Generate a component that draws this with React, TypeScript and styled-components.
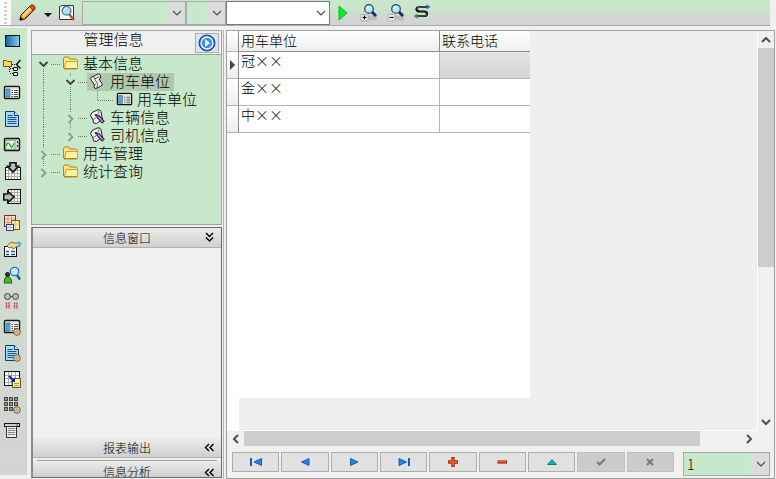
import React from "react";
import styled, { createGlobalStyle, css } from "styled-components";

const Global = createGlobalStyle`
  * { box-sizing: border-box; }
  html, body, #root { height: 100%; }
  body {
    margin: 0;
    overflow: hidden;
    background: #f0f0f0;
    color: #000;
    font-family: "Noto Sans CJK SC", "Liberation Sans", sans-serif;
    font-weight: 300;
  }
  button, select { font: inherit; color: inherit; }
  svg { display: block; flex: none; }
`;

/* ---------- layout ---------- */

const Shell = styled.div`
  display: flex;
  flex-direction: column;
  height: 100vh;
`;

const Toolbar = styled.header`
  display: flex;
  align-items: center;
  flex: none;
  height: 26px;
  margin-right: 6px;
  border-bottom: 1px solid #a9a9a9;
  background: linear-gradient(#c8e8cb 0%, #c8e8cb 25%, #d3d3d3 85%);
`;

const Grip = styled.div`
  display: flex;
  align-items: center;
  align-self: stretch;
  width: 11px;
  padding-left: 4px;
  margin-right: 6px;
  background: #fafafa;
`;

const ToolButton = styled.button<{ $w: number }>`
  display: flex;
  align-items: center;
  justify-content: center;
  flex: none;
  width: ${(p) => p.$w}px;
  height: 24px;
  padding: 0;
  border: 0;
  background: none;
`;

const Combo = styled.div<{ $w: number }>`
  display: grid;
  align-items: center;
  flex: none;
  width: ${(p) => p.$w}px;
  height: 24px;
  & > * { grid-area: 1 / 1; }
  & > svg { justify-self: end; margin-right: 4px; pointer-events: none; }
`;

const ComboSelect = styled.select<{ $tone: "green" | "white" }>`
  appearance: none;
  width: 100%;
  height: 100%;
  padding: 0 22px 0 3px;
  border: 1px solid ${(p) => (p.$tone === "white" ? "#7a7a7a" : "#a9a9a9")};
  border-radius: 0;
  outline: 0;
  font-size: 14px;
  line-height: 20px;
  background: ${(p) =>
    p.$tone === "white" ? "#fff" : "linear-gradient(to left, #dcdcdc 18px, #c8e8cb 18px)"};
`;

const ToolGroup = styled.div`
  display: flex;
  margin-left: 5px;
`;

const Body = styled.div`
  display: flex;
  flex: 1;
  min-height: 0;
  padding-top: 4px;
`;

const Strip = styled.nav`
  display: flex;
  flex-direction: column;
  flex: none;
  width: 27px;
  margin: -2px 4px 4px 0;
  background: linear-gradient(#c8e8cb 0%, #cfdfd0 45%, #d3d3d3 100%);
`;

const StripButton = styled.button`
  display: flex;
  align-items: center;
  justify-content: center;
  flex: none;
  width: 23px;
  height: 26px;
  padding: 0;
  border: 0;
  background: none;
`;

const Side = styled.aside`
  display: flex;
  flex-direction: column;
  flex: none;
  width: 191px;
`;

const TreePanel = styled.section`
  flex: none;
  height: 195px;
  border: 1px solid #a0a0a0;
  background: #c8e8cb;
`;

const PanelTitle = styled.div`
  display: flex;
  height: 24px;
  border-bottom: 1px solid #a0a0a0;
  background: #f0f0f0;
`;

const TitleText = styled.h1`
  flex: 1;
  margin: 0;
  text-align: center;
  font-size: 15px;
  line-height: 16px;
  font-weight: inherit;
`;

const GoButton = styled.button`
  display: flex;
  align-items: center;
  justify-content: center;
  width: 24px;
  height: 20px;
  margin: 2px 2px 0 0;
  padding: 0;
  border: 1px solid #b3a9ae;
  background: #dbe3ee;
`;

const TreeList = styled.ul`
  margin: 0;
  padding: 0 0 0 1px;
  list-style: none;
`;

const TreeRow = styled.li`
  display: flex;
  height: 18px;
`;

const Node = styled.button<{ $selected?: boolean }>`
  display: flex;
  align-items: center;
  height: 18px;
  padding: 0 4px 2px 2px;
  gap: 4px;
  border: 0;
  background: ${(p) => (p.$selected ? "#aec9b0" : "none")};
  font-size: 15px;
  line-height: 16px;
  white-space: nowrap;
`;

const Accordion = styled.section`
  display: flex;
  flex-direction: column;
  flex: 1;
  min-height: 0;
  margin: 2px 0 1px;
  border: 1px solid #696969;
  border-left: 2px solid #8a8a8a;
  overflow: hidden;
`;

const Fold = styled.button<{ $clipped?: boolean }>`
  display: grid;
  grid-template-columns: 1fr auto;
  align-items: ${(p) => (p.$clipped ? "start" : "center")};
  flex: none;
  height: ${(p) => (p.$clipped ? 16 : 20)}px;
  overflow: hidden;
  padding: ${(p) => (p.$clipped ? 2 : 0)}px 6px 0 17px;
  border: 0;
  border-bottom: ${(p) => (p.$clipped ? 0 : 1)}px solid #b0b0b0;
  background: linear-gradient(#ececec, #cfcfcf);
  font-size: 12px;
  line-height: 18px;
  & > svg { margin-top: ${(p) => (p.$clipped ? 4 : 0)}px; }
`;

const FoldBody = styled.div`
  flex: 1;
`;

const FoldGap = styled.div`
  flex: none;
  height: 3px;
  margin-right: 4px;
  margin-left: 4px;
  border-bottom: 1px solid #a0a0a0;
`;

const Main = styled.main`
  display: flex;
  flex-direction: column;
  flex: 1;
  min-width: 0;
  margin: 0 1px 0 2px;
  border: 1px solid #a0a0a0;
`;

const Split = styled.div`
  width: 1px;
  margin-left: 1px;
  background: #b4b4b4;
`;

const GridArea = styled.div`
  display: flex;
  flex: 1;
  min-height: 0;
`;

const Sheet = styled.div`
  display: flex;
  flex-direction: column;
  flex: 1;
  min-width: 0;
  background: linear-gradient(to right, #fff 12px, #efefef 12px);
`;

const Paper = styled.div`
  align-self: flex-start;
  flex: 1;
  margin-bottom: 32px;
  background: #fff;
`;

const Table = styled.table`
  border-collapse: separate;
  border-spacing: 0;
  table-layout: fixed;
  width: 303px;
  font-size: 14px;
`;

const cellBase = css`
  padding: 0 2px;
  text-align: left;
  vertical-align: top;
  font-weight: inherit;
  border-bottom: 1px solid #b4b4b4;
`;

const HeadCell = styled.th<{ $last?: boolean }>`
  ${cellBase}
  height: 21px;
  line-height: 19px;
  border-right: ${(p) => (p.$last ? 0 : 1)}px solid #8c8c8c;
  border-bottom-color: #8c8c8c;
  background: linear-gradient(#fff, #eee);
`;

const MarkCell = styled.th`
  ${cellBase}
  width: 12px;
  padding: 0 0 0 3px;
  vertical-align: middle;
  border-right: 1px solid #8c8c8c;
  background: linear-gradient(#fff, #eee);
`;

const Cell = styled.td<{ $active?: boolean; $last?: boolean }>`
  ${cellBase}
  height: 27px;
  line-height: 16px;
  border-right: ${(p) => (p.$last ? 0 : 1)}px solid #b4b4b4;
  background: ${(p) => (p.$active ? "linear-gradient(#e3e3e3, #d5d5d5)" : "#fff")};
`;

const VBar = styled.div`
  display: flex;
  flex-direction: column;
  align-items: center;
  flex: none;
  width: 17px;
  border-left: 1px solid #fff;
`;

const HBar = styled.div`
  display: flex;
  align-items: center;
  flex: none;
  height: 16px;
  margin-right: 17px;
  border-top: 1px solid #fff;
`;

const Arrow = styled.button`
  display: flex;
  align-items: center;
  justify-content: center;
  flex: none;
  width: 17px;
  height: 17px;
  padding: 0;
  border: 0;
  background: none;
`;

const Track = styled.div<{ $vertical?: boolean }>`
  flex: 1;
  align-self: stretch;
  display: flex;
  flex-direction: ${(p) => (p.$vertical ? "column" : "row")};
`;

const Thumb = styled.div<{ $share: number }>`
  flex: 0 0 ${(p) => p.$share}%;
  background: #cdcdcd;
`;

const Pager = styled.footer`
  display: flex;
  align-items: flex-start;
  flex: none;
  height: 32px;
  padding: 6px 4px 0 5px;
  gap: 9px;
`;

const PagerButtons = styled.div`
  display: flex;
  flex: 1;
  gap: 2px;
`;

const PagerButton = styled.button`
  display: flex;
  align-items: center;
  justify-content: center;
  flex: 1;
  height: 20px;
  padding: 0;
  border: 1px solid #adadad;
  background: #e1e1e1;
  &:disabled { border-color: #bfbfbf; background: #ccc; }
`;

/* ---------- glyphs ---------- */

type Dir = "down" | "up" | "left" | "right";
const chevrons: Record<Dir, string> = {
  down: "M1 3l4 4 4-4",
  up: "M1 7l4-4 4 4",
  left: "M7 1L3 5l4 4",
  right: "M3 1l4 4-4 4",
};

const Chevron = ({ dir, w = 1.2, color = "#505050" }: { dir: Dir; w?: number; color?: string }) => (
  <svg width="10" height="10" viewBox="0 0 10 10" fill="none" stroke={color} strokeWidth={w}>
    <path d={chevrons[dir]} />
  </svg>
);

const DoubleChevron = ({ open }: { open?: boolean }) => (
  <svg width="11" height="11" viewBox="0 0 11 11" fill="none" stroke="#000" strokeWidth="1.4">
    <path d={open ? "M2 1l3.500 3.500L9 1M2 5.500L5.500 9 9 5.500" : "M5 2L1.500 5.500 5 9M9.500 2L6 5.500 9.500 9"} />
  </svg>
);

const Icon = ({ children, size = 18 }: { children: React.ReactNode; size?: number }) => (
  <svg width={size} height={size} viewBox="0 0 18 18" fill="none" stroke="#111" strokeWidth="1">
    {children}
  </svg>
);

const Gear = () => (
  <g>
    <circle cx="14" cy="14" r="3.300" fill="#f0d7a0" stroke="#6d5532" />
    <circle cx="14" cy="14" r="1.200" fill="#fff" stroke="#8a6f3c" strokeWidth=".8" />
  </g>
);

const FormShape = () => (
  <g>
    <rect x="1.500" y="2.500" width="15" height="12" rx="1" fill="#f5f5f5" strokeWidth="1.400" />
    <path d="M2.500 4h13" stroke="#ccc" />
    <rect x="3" y="5" width="4" height="8" fill="#58a7dc" stroke="#235b8b" strokeWidth=".6" />
    <path d="M8.500 6.500h1.500M8.500 8.500h1.500M8.500 10.500h1.500M8.500 12.500h1.500M11 6.500h4M11 8.500h4M11 10.500h4M11 12.500h4" stroke="#555" />
  </g>
);

const DocShape = () => (
  <g>
    <path d="M2.500 1.500h9l4 4v11h-13z" fill="#a5dcf8" stroke="#123c64" />
    <path d="M11.500 1.500v4h4" fill="#e9f8ff" stroke="#123c64" />
    <path d="M4.500 5.500h5M4.500 7.500h9M4.500 9.500h9M4.500 11.500h9M4.500 13.500h9" stroke="#17528a" />
  </g>
);

const Lens = ({ minus }: { minus?: boolean }) => (
  <Icon>
    <path d="M7 11.500h10v5H7z" fill="#bdbdbd" stroke="none" />
    <path d="M11.500 7.500l4.500 4.500" stroke="#102c60" strokeWidth="2.800" />
    <circle cx="9" cy="4.900" r="4.300" fill="#b5ecfb" stroke="#21415f" strokeWidth="1.200" />
    <path d="M6.500 4.500q.5-1.700 2.200-2" stroke="#fff" strokeWidth="1.300" />
    <rect x="1" y="10.500" width="7" height="6.500" rx="1" fill="#eee" stroke="#999" strokeWidth=".7" />
    <path d={minus ? "M2.500 13.500h4" : "M2.500 13.500h4M4.500 11.500v4"} stroke="#000" strokeWidth="1.200" />
  </Icon>
);

const Folder = () => (
  <svg width="17" height="16" viewBox="0 0 17 16">
    <path d="M1.500 13v-9.500l1-1.500h4l1.500 2h6l1.500 1.500V13z" fill="#ffe37c" stroke="#a98624" />
    <path d="M2.500 13.500l1.500-7h11.500v7z" fill="#fff2a0" stroke="#c9a437" />
    <path d="M2 13.800h13" stroke="#b07f12" strokeWidth="1.300" />
  </svg>
);

const Scroll = () => (
  <svg width="17" height="16" viewBox="0 0 17 16">
    <path d="M1.500 5.500Q2 3.500 4 3.500L9 1q2-.5 2.500 1.500l.2 2.500-1.700 1 3 4.500q.7 2-1 2.500l-5 2.500q-2 0-2-2l.5-1.500L2.500 7.500z" fill="#eee" stroke="#222" />
    <path d="M4 4q1.500 0 1.500 1.500L8.500 11q.5 2-1 4M5.500 6l5-2.500M5 12.500l2-1" stroke="#666" fill="none" />
  </svg>
);

const ScrollPen = () => (
  <svg width="17" height="16" viewBox="0 0 17 16">
    <path d="M1.500 6.500L3 3.500 9 .700q2.500 0 3 2l.5 3.300 1 4-6 4.500-3-.5-.5-3z" fill="#f2f2f2" stroke="#222" />
    <path d="M9 1.500l1 3-4 2M4 10.500l3-1.500" stroke="#777" fill="none" />
    <path d="M8.500 7l6 6.500" stroke="#251044" strokeWidth="3.600" />
    <path d="M9 7.500l5 5.500" stroke="#b692ec" strokeWidth="1.600" />
    <path d="M5.500 5l3.500 1-2 2z" fill="#111" />
  </svg>
);

const FormIcon = () => <Icon size={17}><FormShape /></Icon>;

const stripIcons: { name: string; art: React.ReactNode }[] = [
  {
    name: "窗体",
    art: (
      <g>
        <defs>
          <linearGradient id="screen" x1="0" x2="1">
            <stop offset="0" stopColor="#0e62a8" />
            <stop offset="1" stopColor="#8ccdf2" />
          </linearGradient>
        </defs>
        <rect x="2.500" y="3.500" width="14" height="11" fill="url(#screen)" />
      </g>
    ),
  },
  {
    name: "结构",
    art: (
      <g>
        <path d="M.500 8.500v-6h3l1 1h4v5z" fill="#ffd75c" stroke="#6b5518" />
        <path d="M9 6.500h4M6.500 9v6M7 10.500h4M7 15.500h4" strokeDasharray="1 1" />
        <path d="M17.500 2l-4 4.500 4 4" strokeWidth="1.500" />
        <path d="M10.500 9.500h4v3h-4zM10.500 14.500h4v3h-4z" fill="#eee" />
      </g>
    ),
  },
  { name: "表单", art: <FormShape /> },
  { name: "文档", art: <DocShape /> },
  {
    name: "波形",
    art: (
      <g>
        <rect x="1.500" y="2.500" width="15" height="12" rx="1" fill="#d5d5d5" strokeWidth="1.400" />
        <rect x="3" y="4.500" width="9" height="8.500" fill="#e7ffe7" stroke="#777" strokeWidth=".6" />
        <path d="M3.500 10q1.500-6 3.500-1t4-2" stroke="#17a117" strokeWidth="1.200" />
        <path d="M14.500 5v2M14.500 9v2" stroke="#333" />
      </g>
    ),
  },
  {
    name: "导入",
    art: (
      <g>
        <rect x="2.500" y="5.500" width="15" height="12" fill="#fff" />
        <path d="M3 8.500h14M3 11.500h14M3 14.500h14M5.500 6v11M8.500 6v11M11.500 6v11M14.500 6v11" stroke="#aaa" />
        <path d="M7 .800h6v3.500h2.500L10 10 4.500 4.300H7z" fill="#bbb" strokeWidth="1.600" />
      </g>
    ),
  },
  {
    name: "导出",
    art: (
      <g>
        <rect x="5.500" y="1.500" width="12" height="14" fill="#fff" />
        <path d="M6 4.500h11M6 7.500h11M6 10.500h11M6 13.500h11M8.500 2v13M11.500 2v13M14.500 2v13" stroke="#aaa" />
        <path d="M.800 6h4V3.500L11 9l-6.200 5.500V12h-4z" fill="#bbb" strokeWidth="1.600" />
      </g>
    ),
  },
  {
    name: "多表",
    art: (
      <g>
        <rect x="1.500" y="1.500" width="11" height="11" fill="#ffe1d3" stroke="#7b2f20" />
        <path d="M2 5h10M2 8.500h10M5 2v10M8.500 2v10" stroke="#d99584" />
        <rect x="8.500" y="6.500" width="8" height="9" fill="#ffe99b" stroke="#776019" />
        <path d="M9 10h7M12.500 7v8" stroke="#dcc56c" />
        <rect x="3.500" y="10.500" width="7" height="6" fill="#f3f5ff" stroke="#36397e" />
        <path d="M4 13.500h6M7 11v5" stroke="#aab0e2" />
      </g>
    ),
  },
  {
    name: "属性",
    art: (
      <g>
        <rect x="1.500" y="6.500" width="12" height="10" fill="#fff" />
        <path d="M3 11.500h3M8 11.500h4M3 14.500h3M8 14.500h4" stroke="#2f42b4" strokeWidth="1.400" />
        <path d="M4 6l4-4 3 1h3l3-1v4l-4 1-3 2-1-2-3 1z" fill="#ecd889" stroke="#5d5226" strokeWidth=".8" />
        <path d="M15 2h3v4h-3z" fill="#58b8e6" stroke="none" />
      </g>
    ),
  },
  {
    name: "用户查询",
    art: (
      <g>
        <path d="M1 17l1-5 2.500-2 3 2 1.500 5z" fill="#47b82d" stroke="#22641a" />
        <circle cx="4.500" cy="8.500" r="2" fill="#333" />
        <path d="M14 9l3 4.500" stroke="#1b559a" strokeWidth="2.400" />
        <circle cx="11.500" cy="5.500" r="4.200" fill="#b8eeff" stroke="#2578b8" strokeWidth="1.300" />
        <path d="M9.500 5q.5-2 2-2" stroke="#fff" />
      </g>
    ),
  },
  {
    name: "查看",
    art: (
      <g>
        <circle cx="4.500" cy="4.500" r="3" fill="#bbb" stroke="#444" />
        <circle cx="12.500" cy="4.500" r="3" fill="#bbb" stroke="#444" />
        <path d="M7.500 4.500h2" stroke="#444" />
        <path d="M3.500 10.500v6M6 10.500v6M11.500 10.500v6M14 10.500v6" stroke="#cf3e52" strokeDasharray="2 .4" strokeWidth="1.400" />
      </g>
    ),
  },
  { name: "表单设置", art: <g><FormShape /><Gear /></g> },
  { name: "文档设置", art: <g><DocShape /><Gear /></g> },
  {
    name: "数据转移",
    art: (
      <g>
        <rect x="1.500" y="1.500" width="15" height="14" fill="#fff" />
        <path d="M2 5.500h14M2 8.500h14M2 12.500h14M5.500 2v13M8.500 2v13M12.500 2v13" stroke="#aaa" />
        <path d="M9.500 8.500h8v9h-8z" fill="#fff39c" stroke="#5f5620" />
        <path d="M11 13.500h5M11 15.500h5" stroke="#a79b45" />
        <path d="M6 6l4 4" stroke="#1720b1" strokeWidth="2" />
        <path d="M12 12H7.500L12 7.500z" fill="#1720b1" stroke="none" />
      </g>
    ),
  },
  {
    name: "矩阵设置",
    art: (
      <g>
        {[1, 6, 11].flatMap((y) =>
          [1, 6, 11].map((x) => (
            <rect key={`${x}-${y}`} x={x + 0.5} y={y + 0.5} width="3" height="3" fill="#999" stroke="#444" />
          )),
        )}
        <Gear />
      </g>
    ),
  },
  {
    name: "打印",
    art: (
      <g>
        <rect x="1.500" y="1.500" width="15" height="3" fill="#ccc" />
        <path d="M3.500 4.500h10v11h-10z" fill="#eee" stroke="#333" />
        <path d="M5 6.500h7M5 8.500h7M5 10.500h7M5 12.500h7" stroke="#888" />
        <path d="M13 3h2" stroke="#278a27" />
      </g>
    ),
  },
];

/* ---------- tree ---------- */

type Guide = { up?: boolean; down?: boolean; branch?: boolean; arrow?: "open" | "closed" };

const GuideCell = ({ up, down, branch, arrow }: Guide) => (
  <svg width="27" height="18" viewBox="0 0 27 18" fill="none" stroke="#777" strokeWidth="1">
    {up && <path d={arrow ? "M10.500 0v3" : "M10.500 0v9"} strokeDasharray="1 1" />}
    {down && <path d={arrow ? "M10.500 14v4" : "M10.500 9v9"} strokeDasharray="1 1" />}
    {branch && <path d={arrow ? "M18 9.500h9" : "M11 9.500h16"} strokeDasharray="1 1" />}
    {arrow === "open" && <path d="M6.500 7l4 4 4-4" stroke="#404040" strokeWidth="1.800" />}
    {arrow === "closed" && <path d="M8.500 6l4 4-4 4" stroke="#8d9c8e" strokeWidth="1.800" />}
  </svg>
);

const rail: Guide = { up: true, down: true };
const tree: { label: string; guides: Guide[]; icon: React.ReactNode; selected?: boolean }[] = [
  { label: "基本信息", guides: [{ down: true, branch: true, arrow: "open" }], icon: <Folder /> },
  { label: "用车单位", guides: [rail, { up: true, down: true, branch: true, arrow: "open" }], icon: <Scroll />, selected: true },
  { label: "用车单位", guides: [rail, rail, { up: true, branch: true }], icon: <FormIcon /> },
  { label: "车辆信息", guides: [rail, { up: true, down: true, branch: true, arrow: "closed" }], icon: <ScrollPen /> },
  { label: "司机信息", guides: [rail, { up: true, branch: true, arrow: "closed" }], icon: <ScrollPen /> },
  { label: "用车管理", guides: [{ up: true, down: true, branch: true, arrow: "closed" }], icon: <Folder /> },
  { label: "统计查询", guides: [{ up: true, branch: true, arrow: "closed" }], icon: <Folder /> },
];

/* ---------- pager ---------- */

const pager: { name: string; art: React.ReactNode; disabled?: boolean }[] = [
  { name: "首条", art: <g fill="#2184e4" stroke="#135fbd"><path d="M4 5v8" strokeWidth="2" /><path d="M14.500 5.500v7L7 9z" /></g> },
  { name: "上一条", art: <path d="M13 5.500v7L5.500 9z" fill="#2184e4" stroke="#135fbd" /> },
  { name: "下一条", art: <path d="M5.500 5.500v7L13 9z" fill="#2184e4" stroke="#135fbd" /> },
  { name: "末条", art: <g fill="#2184e4" stroke="#135fbd"><path d="M14 5v8" strokeWidth="2" /><path d="M4 5.500v7L11.500 9z" /></g> },
  { name: "新增", art: <g><path d="M9 4v10M4 9h10" stroke="#a52b0b" strokeWidth="3.400" /><path d="M9 5v8M5 9h8" stroke="#f5632a" strokeWidth="1.400" /></g> },
  { name: "删除", art: <g><path d="M4.500 9h9.500" stroke="#a52b0b" strokeWidth="3.200" /><path d="M5.500 8.700h7.500" stroke="#f5632a" strokeWidth="1.300" /></g> },
  { name: "编辑", art: <path d="M4.500 11.500L9 6.500l4.500 5z" fill="#19b3ad" stroke="#0c7e83" /> },
  { name: "保存", art: <path d="M5 9l2.500 2.500L13 6" stroke="#7b7b7b" strokeWidth="2.200" />, disabled: true },
  { name: "取消", art: <path d="M6 6l6 6M12 6l-6 6" stroke="#7b7b7b" strokeWidth="2.200" />, disabled: true },
];

const rows = ["冠××", "金××", "中××"];

export default function App() {
  return (
    <>
      <Global />
      <Shell lang="zh-CN">
        <Toolbar>
          <Grip>
            <svg width="3" height="24" viewBox="0 0 3 24"><path d="M1.500 1v22" stroke="#bcbcbc" strokeWidth="2" strokeDasharray="2 2" /></svg>
          </Grip>
          <ToolButton $w={20} aria-label="编辑">
            <Icon>
              <path d="M2 16l1-5 9-9 4 4-9 9z" fill="#f4b833" stroke="#332207" />
              <path d="M5 12l8-8" stroke="#ffe889" strokeWidth="1.400" />
              <path d="M7 14l8-8" stroke="#b96e12" />
              <path d="M11.500 2.500L13 1h2l2 2v2l-1.500 1.500z" fill="#e65231" stroke="#6b1c0d" />
              <path d="M2 16l.5-3L5 15.500z" fill="#111" />
            </Icon>
          </ToolButton>
          <ToolButton $w={22} aria-label="更多">
            <svg width="8" height="10" viewBox="0 0 8 10"><path d="M0 5h8L4 9z" fill="#000" /></svg>
          </ToolButton>
          <ToolButton $w={16} aria-label="预览">
            <Icon>
              <path d="M1.500 2.500l3-1h11v14h-14z" fill="#f8f8f8" stroke="#333" />
              <path d="M11 10l5 6" stroke="#a9532b" strokeWidth="2.200" />
              <circle cx="8.500" cy="6.800" r="4.400" fill="#9fe1f7" stroke="#4b7690" strokeWidth="1.300" />
              <path d="M6.500 6q.5-2 2.500-2" stroke="#fff" strokeWidth="1.200" />
            </Icon>
          </ToolButton>
          <ToolGroup>
            <Combo $w={2} />
            <Combo $w={104}><ComboSelect $tone="green" aria-label="字段" /><Chevron dir="down" /></Combo>
            <Combo $w={40}><ComboSelect $tone="green" aria-label="条件" /><Chevron dir="down" /></Combo>
            <Combo $w={104}><ComboSelect $tone="white" aria-label="值" /><Chevron dir="down" /></Combo>
          </ToolGroup>
          <ToolButton $w={26} aria-label="执行">
            <svg width="10" height="16" viewBox="0 0 10 16"><path d="M1 1l8 7-8 7z" fill="#00f020" stroke="#12b82a" /></svg>
          </ToolButton>
          <ToolButton $w={26} aria-label="放大"><Lens /></ToolButton>
          <ToolButton $w={27} aria-label="缩小"><Lens minus /></ToolButton>
          <ToolButton $w={26} aria-label="刷新">
            <Icon>
              <path d="M14 3H7Q3.500 3 3.500 5.200T7 7.500h4q3 0 3 2.300T11 12H4" stroke="#111" strokeWidth="2.200" />
              <path d="M13.500 3H7Q4 3 4 5M4 12h7q2.500 0 2.500-2" stroke="#aaa" strokeWidth=".6" />
              <path d="M13.500 0l4 3-4 2.500z" fill="#3767dd" stroke="none" />
              <path d="M4.500 9.500l-4 2.500 4 3z" fill="#2da43a" stroke="none" />
            </Icon>
          </ToolButton>
        </Toolbar>

        <Body>
          <Strip>
            {stripIcons.map((it) => (
              <StripButton key={it.name} aria-label={it.name}><Icon>{it.art}</Icon></StripButton>
            ))}
          </Strip>

          <Side>
            <TreePanel>
              <PanelTitle>
                <TitleText>管理信息</TitleText>
                <GoButton aria-label="前往">
                  <Icon>
                    <circle cx="9" cy="9" r="8" fill="#1c62bd" stroke="#134a99" />
                    <circle cx="9" cy="9" r="6" fill="#3f8fe0" stroke="#fff" strokeWidth="1.300" />
                    <path d="M7 5l5 4-5 4z" fill="#fff" stroke="none" />
                  </Icon>
                </GoButton>
              </PanelTitle>
              <TreeList>
                {tree.map((n, i) => (
                  <TreeRow key={i}>
                    {n.guides.map((g, k) => <GuideCell key={k} {...g} />)}
                    <Node $selected={n.selected}>{n.icon}{n.label}</Node>
                  </TreeRow>
                ))}
              </TreeList>
            </TreePanel>
            <Accordion>
              <Fold aria-expanded="true">信息窗口<DoubleChevron open /></Fold>
              <FoldBody />
              <Fold aria-expanded="false">报表输出<DoubleChevron /></Fold>
              <FoldGap />
              <Fold $clipped aria-expanded="false">信息分析<DoubleChevron /></Fold>
            </Accordion>
          </Side>
          <Split />

          <Main>
            <GridArea>
              <Sheet>
                <Paper>
                  <Table>
                    <colgroup>
                      <col width="12" />
                      <col width="201" />
                      <col width="90" />
                    </colgroup>
                    <thead>
                      <tr>
                        <MarkCell as="td" />
                        <HeadCell>用车单位</HeadCell>
                        <HeadCell $last>联系电话</HeadCell>
                      </tr>
                    </thead>
                    <tbody>
                      {rows.map((name, i) => (
                        <tr key={name}>
                          <MarkCell>
                            {i === 0 && <svg width="6" height="10" viewBox="0 0 6 10"><path d="M0 0l5 5-5 5z" fill="#444" /></svg>}
                          </MarkCell>
                          <Cell>{name}</Cell>
                          <Cell $last $active={i === 0} />
                        </tr>
                      ))}
                    </tbody>
                  </Table>
                </Paper>
              </Sheet>
              <VBar>
                <Arrow aria-label="向上"><Chevron dir="up" w={2} /></Arrow>
                <Track $vertical><Thumb $share={60} /></Track>
                <Arrow aria-label="向下"><Chevron dir="down" w={2} /></Arrow>
              </VBar>
            </GridArea>
            <HBar>
              <Arrow aria-label="向左"><Chevron dir="left" w={2} /></Arrow>
              <Track><Thumb $share={92} /></Track>
              <Arrow aria-label="向右"><Chevron dir="right" w={2} /></Arrow>
            </HBar>
            <Pager>
              <PagerButtons>
                {pager.map((b) => (
                  <PagerButton key={b.name} aria-label={b.name} disabled={b.disabled}><Icon>{b.art}</Icon></PagerButton>
                ))}
              </PagerButtons>
              <Combo $w={87}>
                <ComboSelect $tone="green" aria-label="页码"><option>1</option></ComboSelect>
                <Chevron dir="down" />
              </Combo>
            </Pager>
          </Main>
        </Body>
      </Shell>
    </>
  );
}
